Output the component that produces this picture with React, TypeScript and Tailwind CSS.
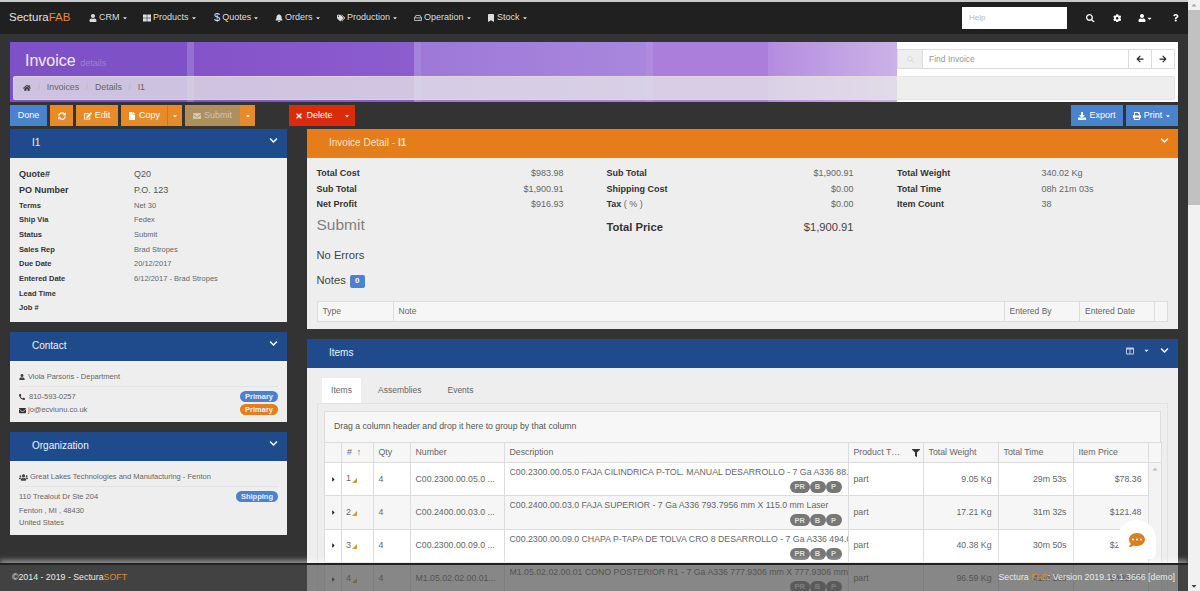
import {
  FaArrowLeft,
  FaArrowRight,
  FaBell,
  FaBookmark,
  FaChevronDown,
  FaColumns,
  FaCog,
  FaDownload,
  FaEdit,
  FaEnvelope,
  FaFile,
  FaFilter,
  FaHome,
  FaPhoneAlt,
  FaPrint,
  FaQuestion,
  FaRegHdd,
  FaSearch,
  FaSyncAlt,
  FaTags,
  FaThLarge,
  FaTimes,
  FaUser,
  FaUsers,
  FaCaretDown,
  FaCaretRight,
  FaCaretUp,
  FaCommentDots,
} from "react-icons/fa"
import type { ReactNode } from "react"

const navItems = [
  { label: "CRM", icon: <FaUser />, w: "w-[54px]" },
  { label: "Products", icon: <FaThLarge />, w: "w-[71px]" },
  { label: "Quotes", icon: <span className="text-[11px] leading-none">$</span>, w: "w-[61px]" },
  { label: "Orders", icon: <FaBell />, w: "w-[62px]" },
  { label: "Production", icon: <FaTags />, w: "w-[77px]" },
  { label: "Operation", icon: <FaRegHdd />, w: "w-[73px]" },
  { label: "Stock", icon: <FaBookmark />, w: "w-[50px]" },
]

const info = [
  ["Terms", "Net 30"],
  ["Ship Via", "Fedex"],
  ["Status", "Submit"],
  ["Sales Rep", "Brad Stropes"],
  ["Due Date", "20/12/2017"],
  ["Entered Date", "6/12/2017 - Brad Stropes"],
  ["Lead Time", ""],
  ["Job #", ""],
]

const rows = [
  { n: 1, num: "C00.2300.00.05.0 ...", desc: "C00.2300.00.05.0 FAJA CILINDRICA P-TOL. MANUAL DESARROLLO - 7 Ga A336 88.9000 mm", weight: "9.05 Kg", time: "29m 53s", price: "$78.36" },
  { n: 2, num: "C00.2400.00.03.0 ...", desc: "C00.2400.00.03.0 FAJA SUPERIOR - 7 Ga A336 793.7956 mm X 115.0 mm Laser", weight: "17.21 Kg", time: "31m 32s", price: "$121.48" },
  { n: 3, num: "C00.2300.00.09.0 ...", desc: "C00.2300.00.09.0 CHAPA P-TAPA DE TOLVA CRO 8 DESARROLLO - 7 Ga A336 494.0000 mm", weight: "40.38 Kg", time: "30m 50s", price: "$210.12" },
  { n: 4, num: "M1.05.02.02.00.01...", desc: "M1.05.02.02.00.01 CONO POSTERIOR R1 - 7 Ga A336 777.9306 mm X 777.9306 mm", weight: "96.59 Kg", time: "41m 10s", price: "$402.77" },
]

const Btn = ({ className, children }: { className: string; children: ReactNode }) => (
  <div className={`flex h-[21px] items-center justify-center gap-[3px] text-[9px] text-white ${className}`}>{children}</div>
)

const PanelHead = ({ title, color = "bg-[#1f4b8c]", right }: { title: ReactNode; color?: string; right?: ReactNode }) => (
  <div className={`relative flex h-[29px] items-center pl-[22px] text-[10px] text-[#f2f2f2] ${color}`}>
    <span className="pb-[2px]">{title}</span>
    <div className="ml-auto flex items-center gap-[10px] self-start pr-[9px] pt-[7px] text-[9px] text-white">
      {right}
      <FaChevronDown />
    </div>
  </div>
)

const Pill = ({ color, children }: { color: string; children: ReactNode }) => (
  <span className={`rounded-full px-[5px] py-px text-[7.5px] leading-[9px] font-bold text-[#eef] ${color}`}>{children}</span>
)

const Mini = ({ children }: { children: ReactNode }) => (
  <span className="flex h-[12px] min-w-[16px] items-center justify-center rounded-full bg-[#777] px-[4.5px] text-[7.5px] font-bold text-[#ddd]">{children}</span>
)

const App = () => {
  return (
    <div className="relative flex h-[591px] w-[1200px] overflow-hidden bg-[#f1f1f1] font-['Liberation_Sans',Arial,sans-serif]">
      <div className="flex w-[1188px] flex-col bg-[#333333]">
        <div className="h-[2px] shrink-0 bg-[#c9c9c9]" />
        {/* navbar */}
        <div className="flex h-[32px] shrink-0 items-center bg-[#202020] pl-[9px] text-[#ddd]">
          <div className="w-[80px] text-[11.5px] text-[#e2e2e2]">
            Sectura<span className="text-[#e58a2d]">FAB</span>
          </div>
          {navItems.map((item) => (
            <div key={item.label} className={`flex items-center gap-[2px] text-[9px] ${item.w}`}>
              <span className="text-[8px]">{item.icon}</span>
              {item.label}
              <FaCaretDown className="text-[6px]" />
            </div>
          ))}
          <div className="ml-[425px] flex h-[22px] w-[105px] items-center bg-white pl-[7px] text-[8px] text-[#bbb]">Help</div>
          <FaSearch className="ml-[19px] text-[8.5px] text-white" />
          <FaCog className="ml-[18px] text-[8.5px] text-white" />
          <FaUser className="ml-[17px] text-[8px] text-white" />
          <FaCaretDown className="text-[7px] text-white" />
          <FaQuestion className="ml-[19px] text-[7.5px] text-white" />
        </div>

        <div className="flex min-h-0 flex-1 flex-col pl-[10px] pr-[10px] pt-[8px]">
          {/* banner */}
          <div className="relative h-[60px] shrink-0 bg-white">
            <div className="h-full w-[887px] bg-[linear-gradient(90deg,#7e52c6_0%,#7e52c6_20%,#9470d0_20%,#9470d0_20.7%,#8453c8_20.7%,#8c5dcd_45.5%,#a384d9_45.5%,#a384d9_46.3%,#9f78d8_46.3%,#a887dd_71.7%,#af8cdf_71.7%,#af8cdf_72.5%,#ab7edc_72.5%,#ab7edc_85.5%,#b48ce2_85.5%,#b48ce2_86.3%,#b68fe1_86.3%,#ccb2e7_100%)] pl-[15px] pt-[7px] text-[16px] text-[#f1ecfa]">
              Invoice <span className="text-[9px] text-[#9a80d0]">details</span>
            </div>
            <div className="absolute inset-x-[3px] top-[34px] flex h-[24px] items-center gap-[6.7px] rounded-[2px] border border-[#dcdcdc]/60 bg-[#e8e8e8]/75 pl-[9px] text-[8.8px] text-[#666]">
              <FaHome className="text-[8px] text-[#444]" />
              <span className="text-[#bbb]">/</span>
              <span>Invoices</span>
              <span className="text-[#bbb]">/</span>
              <span>Details</span>
              <span className="text-[#bbb]">/</span>
              <span>I1</span>
            </div>
            <div className="absolute right-[3px] top-[7px] flex h-[20px] w-[278px] border border-[#ddd] text-[8.5px] text-[#999]">
              <div className="flex w-[24px] items-center justify-center bg-[#eee] text-[#ddd]">
                <FaSearch className="text-[7px]" />
              </div>
              <div className="flex flex-1 items-center border-l border-[#ddd] pl-[6px]">Find Invoice</div>
              <div className="flex w-[23px] items-center justify-center border-l border-[#ddd] text-[8px] text-[#222]">
                <FaArrowLeft />
              </div>
              <div className="flex w-[23px] items-center justify-center border-l border-[#ddd] text-[8px] text-[#222]">
                <FaArrowRight />
              </div>
            </div>
          </div>

          {/* toolbar */}
          <div className="mt-[3px] flex shrink-0 items-center">
            <Btn className="w-[37px] bg-[#4a82cd]">Done</Btn>
            <Btn className="ml-[3px] w-[23px] bg-[#e78b2a]"><FaSyncAlt className="text-[8px]" /></Btn>
            <Btn className="ml-[3px] w-[42px] bg-[#e78b2a]"><FaEdit className="text-[8px]" />Edit</Btn>
            <Btn className="ml-[3px] w-[46px] bg-[#e78b2a]"><FaFile className="text-[8px]" />Copy</Btn>
            <Btn className="w-[15px] border-l border-[#cf7a20] bg-[#e78b2a]"><FaCaretDown className="text-[6px]" /></Btn>
            <Btn className="ml-[3px] w-[55px] bg-[#ae8f5f] text-[#d2c6b0]!"><FaEnvelope className="text-[8px]" />Submit</Btn>
            <Btn className="w-[15px] bg-[#e78b2a]"><FaCaretDown className="text-[6px]" /></Btn>
            <Btn className="ml-[34px] w-[50px] bg-[#dc2a0d]"><FaTimes className="text-[8px]" />Delete</Btn>
            <Btn className="w-[16px] bg-[#dc2a0d]"><FaCaretDown className="text-[6px]" /></Btn>
            <Btn className="ml-auto w-[52px] bg-[#4a82cd]"><FaDownload className="text-[8px]" />Export</Btn>
            <Btn className="ml-[3px] w-[52px] bg-[#4a82cd]"><FaPrint className="text-[8px]" />Print<FaCaretDown className="text-[6px]" /></Btn>
          </div>

          <div className="mt-[3px] flex min-h-0 flex-1 gap-[20px]">
            {/* left column */}
            <div className="flex w-[277px] shrink-0 flex-col gap-[10px]">
              <div>
                <PanelHead title="I1" />
                <div className="h-[164px] bg-[#eeeeee] pl-[9px] pt-[8.5px]">
                  <div className="flex h-[16px] items-center text-[9px] text-[#555]">
                    <span className="w-[115px] font-bold text-[#333]">Quote#</span>Q20
                  </div>
                  <div className="flex h-[15.5px] items-center text-[9px] text-[#555]">
                    <span className="w-[115px] font-bold text-[#333]">PO Number</span>P.O. 123
                  </div>
                  {info.map(([k, v]) => (
                    <div key={k} className="flex h-[14.67px] items-center text-[7.5px] text-[#666]">
                      <span className="w-[115px] font-bold text-[#333]">{k}</span>
                      {v}
                    </div>
                  ))}
                </div>
              </div>

              <div>
                <PanelHead title="Contact" />
                <div className="h-[61px] bg-[#eeeeee] px-[9px] text-[7.5px] text-[#666]">
                  <div className="flex h-[26px] items-center gap-[3px] border-b border-[#e3e3e3] pt-[6px]">
                    <FaUser className="text-[6px] text-[#444]" />
                    Viola Parsons - Department
                  </div>
                  <div className="flex h-[17px] items-center gap-[3px] pt-[3px]">
                    <FaPhoneAlt className="text-[6px] text-[#333]" />
                    <span className="ml-[1px]">810-593-0257</span>
                    <span className="ml-auto"><Pill color="bg-[#4a82cd]">Primary</Pill></span>
                  </div>
                  <div className="flex h-[12px] items-center gap-[2px]">
                    <FaEnvelope className="text-[7px] text-[#333]" />
                    jo@ecviunu.co.uk
                    <span className="ml-auto"><Pill color="bg-[#e67e1c]">Primary</Pill></span>
                  </div>
                </div>
              </div>

              <div>
                <PanelHead title="Organization" />
                <div className="h-[74px] bg-[#eeeeee] px-[9px] text-[7.5px] text-[#666]">
                  <div className="flex h-[26px] items-center gap-[2px] border-b border-[#e3e3e3] pt-[7px]">
                    <FaUsers className="text-[9px] text-[#444]" />
                    Great Lakes Technologies and Manufacturing - Fenton
                  </div>
                  <div className="flex h-[17px] items-center pt-[3px]">
                    110 Trealout Dr Ste 204
                    <span className="ml-auto"><Pill color="bg-[#4a82cd]">Shipping</Pill></span>
                  </div>
                  <div className="flex h-[12.5px] items-center">Fenton , MI , 48430</div>
                  <div className="flex h-[12.5px] items-center">United States</div>
                </div>
              </div>
            </div>

            {/* right column */}
            <div className="flex min-w-0 flex-1 flex-col gap-[10px]">
              <div>
                <PanelHead
                  color="bg-[#e57d1b]"
                  title={
                    <span className="text-[#f8e4ca]">
                      Invoice Detail - <b>I1</b>
                    </span>
                  }
                />
                <div className="h-[171px] bg-[#eeeeee] pl-[9.5px] pt-[8px] text-[#666]">
                  <div className="grid grid-cols-[290px_290.5px_1fr] text-[9px]">
                    <div>
                      <div className="flex h-[15.5px] w-[247px] items-center justify-between"><b className="text-[#333]">Total Cost</b>$983.98</div>
                      <div className="flex h-[15.5px] w-[247px] items-center justify-between"><b className="text-[#333]">Sub Total</b>$1,900.91</div>
                      <div className="flex h-[15.5px] w-[247px] items-center justify-between"><b className="text-[#333]">Net Profit</b>$916.93</div>
                      <div className="mt-[2px] flex h-[20px] items-center text-[15.5px] text-[#808080]">Submit</div>
                    </div>
                    <div>
                      <div className="flex h-[15.5px] w-[247px] items-center justify-between"><b className="text-[#333]">Sub Total</b>$1,900.91</div>
                      <div className="flex h-[15.5px] w-[247px] items-center justify-between"><b className="text-[#333]">Shipping Cost</b>$0.00</div>
                      <div className="flex h-[15.5px] w-[247px] items-center justify-between"><span><b className="text-[#333]">Tax</b> ( % )</span>$0.00</div>
                      <div className="mt-[4.5px] flex h-[20px] w-[247px] items-center justify-between text-[11.2px] text-[#444]"><b className="text-[#333]">Total Price</b>$1,900.91</div>
                    </div>
                    <div>
                      <div className="flex h-[15.5px] items-center"><b className="w-[144.5px] text-[#333]">Total Weight</b>340.02 Kg</div>
                      <div className="flex h-[15.5px] items-center"><b className="w-[144.5px] text-[#333]">Total Time</b>08h 21m 03s</div>
                      <div className="flex h-[15.5px] items-center"><b className="w-[144.5px] text-[#333]">Item Count</b>38</div>
                    </div>
                  </div>
                  <div className="mt-[11px] flex h-[14px] items-center text-[11.2px] text-[#444]">No Errors</div>
                  <div className="mt-[10px] flex h-[16px] items-center gap-[4px] text-[11.2px] text-[#444]">
                    Notes
                    <span className="mt-[2px] flex h-[13px] w-[15px] items-center justify-center rounded-[2px] bg-[#4a82cd] text-[8px] font-bold text-white">0</span>
                  </div>
                  <div className="mr-[10.5px] mt-[13px] flex h-[21px] border border-[#ddd] bg-[#f6f6f6] text-[8.5px] text-[#666]">
                    <div className="flex w-[75px] items-center pl-[5px]">Type</div>
                    <div className="flex flex-1 items-center border-l border-[#ddd] pl-[5px]">Note</div>
                    <div className="flex w-[75.5px] items-center border-l border-[#ddd] pl-[5px]">Entered By</div>
                    <div className="flex w-[75px] items-center border-l border-[#ddd] pl-[5px]">Entered Date</div>
                    <div className="w-[12.5px] border-l border-[#ddd]" />
                  </div>
                </div>
              </div>

              <div className="min-h-0 flex-1">
                <PanelHead
                  title="Items"
                  right={
                    <span className="flex items-center gap-[9px]">
                      <FaColumns className="text-[8px] text-[#b9cbe6]" />
                      <FaCaretDown className="text-[7px] text-[#dfe7f3]" />
                    </span>
                  }
                />
                <div className="h-full bg-[#eeeeee] pl-[10px] pr-[10.5px] pt-[10px]">
                  <div className="flex h-[25px] items-stretch pl-[5px] text-[8.5px] text-[#666]">
                    <div className="flex w-[39px] items-center justify-center bg-white">Items</div>
                    <div className="ml-[17px] flex items-center">Assemblies</div>
                    <div className="ml-[26px] flex items-center">Events</div>
                  </div>
                  <div className="h-full border border-[#e2e2e2] px-[6px] pt-[6.5px]">
                    <div className="flex h-[31.5px] items-center border border-b-0 border-[#ddd] bg-[#f7f7f7] pl-[9px] text-[8.7px] text-[#555]">
                      Drag a column header and drop it here to group by that column
                    </div>
                    <table className="w-[837px] table-fixed border-collapse border border-[#ddd] bg-white text-[8.75px] text-[#666]">
                      <colgroup>
                        <col className="w-[17px]" />
                        <col className="w-[31.5px]" />
                        <col className="w-[37px]" />
                        <col className="w-[94px]" />
                        <col className="w-[344px]" />
                        <col className="w-[75px]" />
                        <col className="w-[75px]" />
                        <col className="w-[75px]" />
                        <col className="w-[75px]" />
                        <col className="w-[13.5px]" />
                      </colgroup>
                      <thead>
                        <tr className="h-[20px] bg-[#f6f6f6] text-left font-normal">
                          <th className="border border-[#ddd]" />
                          <th className="border border-[#ddd] pl-[5px] font-normal">#&nbsp;&nbsp;↑</th>
                          <th className="border border-[#ddd] pl-[5px] font-normal">Qty</th>
                          <th className="border border-[#ddd] pl-[5px] font-normal">Number</th>
                          <th className="border border-[#ddd] pl-[5px] font-normal">Description</th>
                          <th className="border border-[#ddd] pl-[5px] font-normal">
                            <div className="flex items-center justify-between pr-[3px]">
                              Product T…<FaFilter className="text-[8px] text-[#333]" />
                            </div>
                          </th>
                          <th className="border border-[#ddd] pl-[5px] font-normal">Total Weight</th>
                          <th className="border border-[#ddd] pl-[5px] font-normal">Total Time</th>
                          <th className="border border-[#ddd] pl-[5px] font-normal">Item Price</th>
                          <th className="border border-[#ddd]" />
                        </tr>
                      </thead>
                      <tbody>
                        {rows.map((r) => (
                          <tr key={r.n} className={`h-[33.3px] ${r.n % 2 === 0 ? "bg-[#f6f6f6]" : "bg-white"}`}>
                            <td className="border-y border-[#ddd] text-center">
                              <FaCaretRight className="mx-auto text-[7px] text-[#222]" />
                            </td>
                            <td className="border border-[#ddd] pl-[4px]">
                              <span className="flex items-center text-[9px]">
                                {r.n}
                                <svg width="5" height="5" viewBox="0 0 5 5" className="ml-[1px] mt-[2px]">
                                  <path d="M5 0V5H0Z" fill="#d69a3a" />
                                </svg>
                              </span>
                            </td>
                            <td className="border border-[#ddd] pl-[5px]">4</td>
                            <td className="truncate border border-[#ddd] pl-[5px]">{r.num}</td>
                            <td className="border border-[#ddd] pl-[5px] align-top">
                              <div className="overflow-hidden whitespace-nowrap pt-[3px] leading-[12px]">{r.desc}</div>
                              <div className="mr-[6px] mt-[3px] flex justify-end">
                                <Mini>PR</Mini>
                                <Mini>B</Mini>
                                <Mini>P</Mini>
                              </div>
                            </td>
                            <td className="border border-[#ddd] pl-[5px]">part</td>
                            <td className="border border-[#ddd] pr-[6px] text-right">{r.weight}</td>
                            <td className="border border-[#ddd] pr-[6px] text-right">{r.time}</td>
                            <td className="border border-[#ddd] pr-[6px] text-right">{r.price}</td>
                            <td className="bg-[#f3f3f3] align-top">
                              {r.n === 1 && <FaCaretUp className="mx-auto mt-[2px] text-[8px] text-[#bbb]" />}
                            </td>
                          </tr>
                        ))}
                      </tbody>
                    </table>
                  </div>
                </div>
              </div>
            </div>
          </div>
        </div>
      </div>

      {/* page scrollbar */}
      <div className="flex w-[12px] flex-col items-center bg-[#f1f1f1]">
        <div className="flex h-[10px] w-full items-center justify-center">
          <FaCaretUp className="text-[8px] text-[#a8a8a8]" />
        </div>
        <div className="h-[195px] w-full bg-[#c1c1c1]" />
        <div className="mt-auto flex h-[10px] w-full items-center justify-center">
          <FaCaretDown className="text-[8px] text-[#444]" />
        </div>
      </div>

      {/* footer floats over the page */}
      <div className="absolute bottom-0 left-0 flex h-[28px] w-[1188px] items-center justify-between border-t-2 border-[#222] bg-[#4c4c4c]/65 pl-[12px] pr-[13px] text-[8.8px] text-[#e8e8e8] shadow-[0_-3px_5px_rgba(255,255,255,0.45)]">
        <span>
          ©2014 - 2019 - Sectura<span className="text-[#e58a2d]">SOFT</span>
        </span>
        <span>
          Sectura <span className="text-[#e58a2d]">FAB</span>: Version 2019.19.1.3666 [demo]
        </span>
      </div>

      {/* chat bubble */}
      <div className="absolute left-[1117px] top-[520px] flex h-[39px] w-[39px] items-center justify-center rounded-[20px] rounded-br-[6px] bg-white">
        <FaCommentDots className="text-[16px] text-[#d97f1f]" />
      </div>
    </div>
  )
}

export default App
